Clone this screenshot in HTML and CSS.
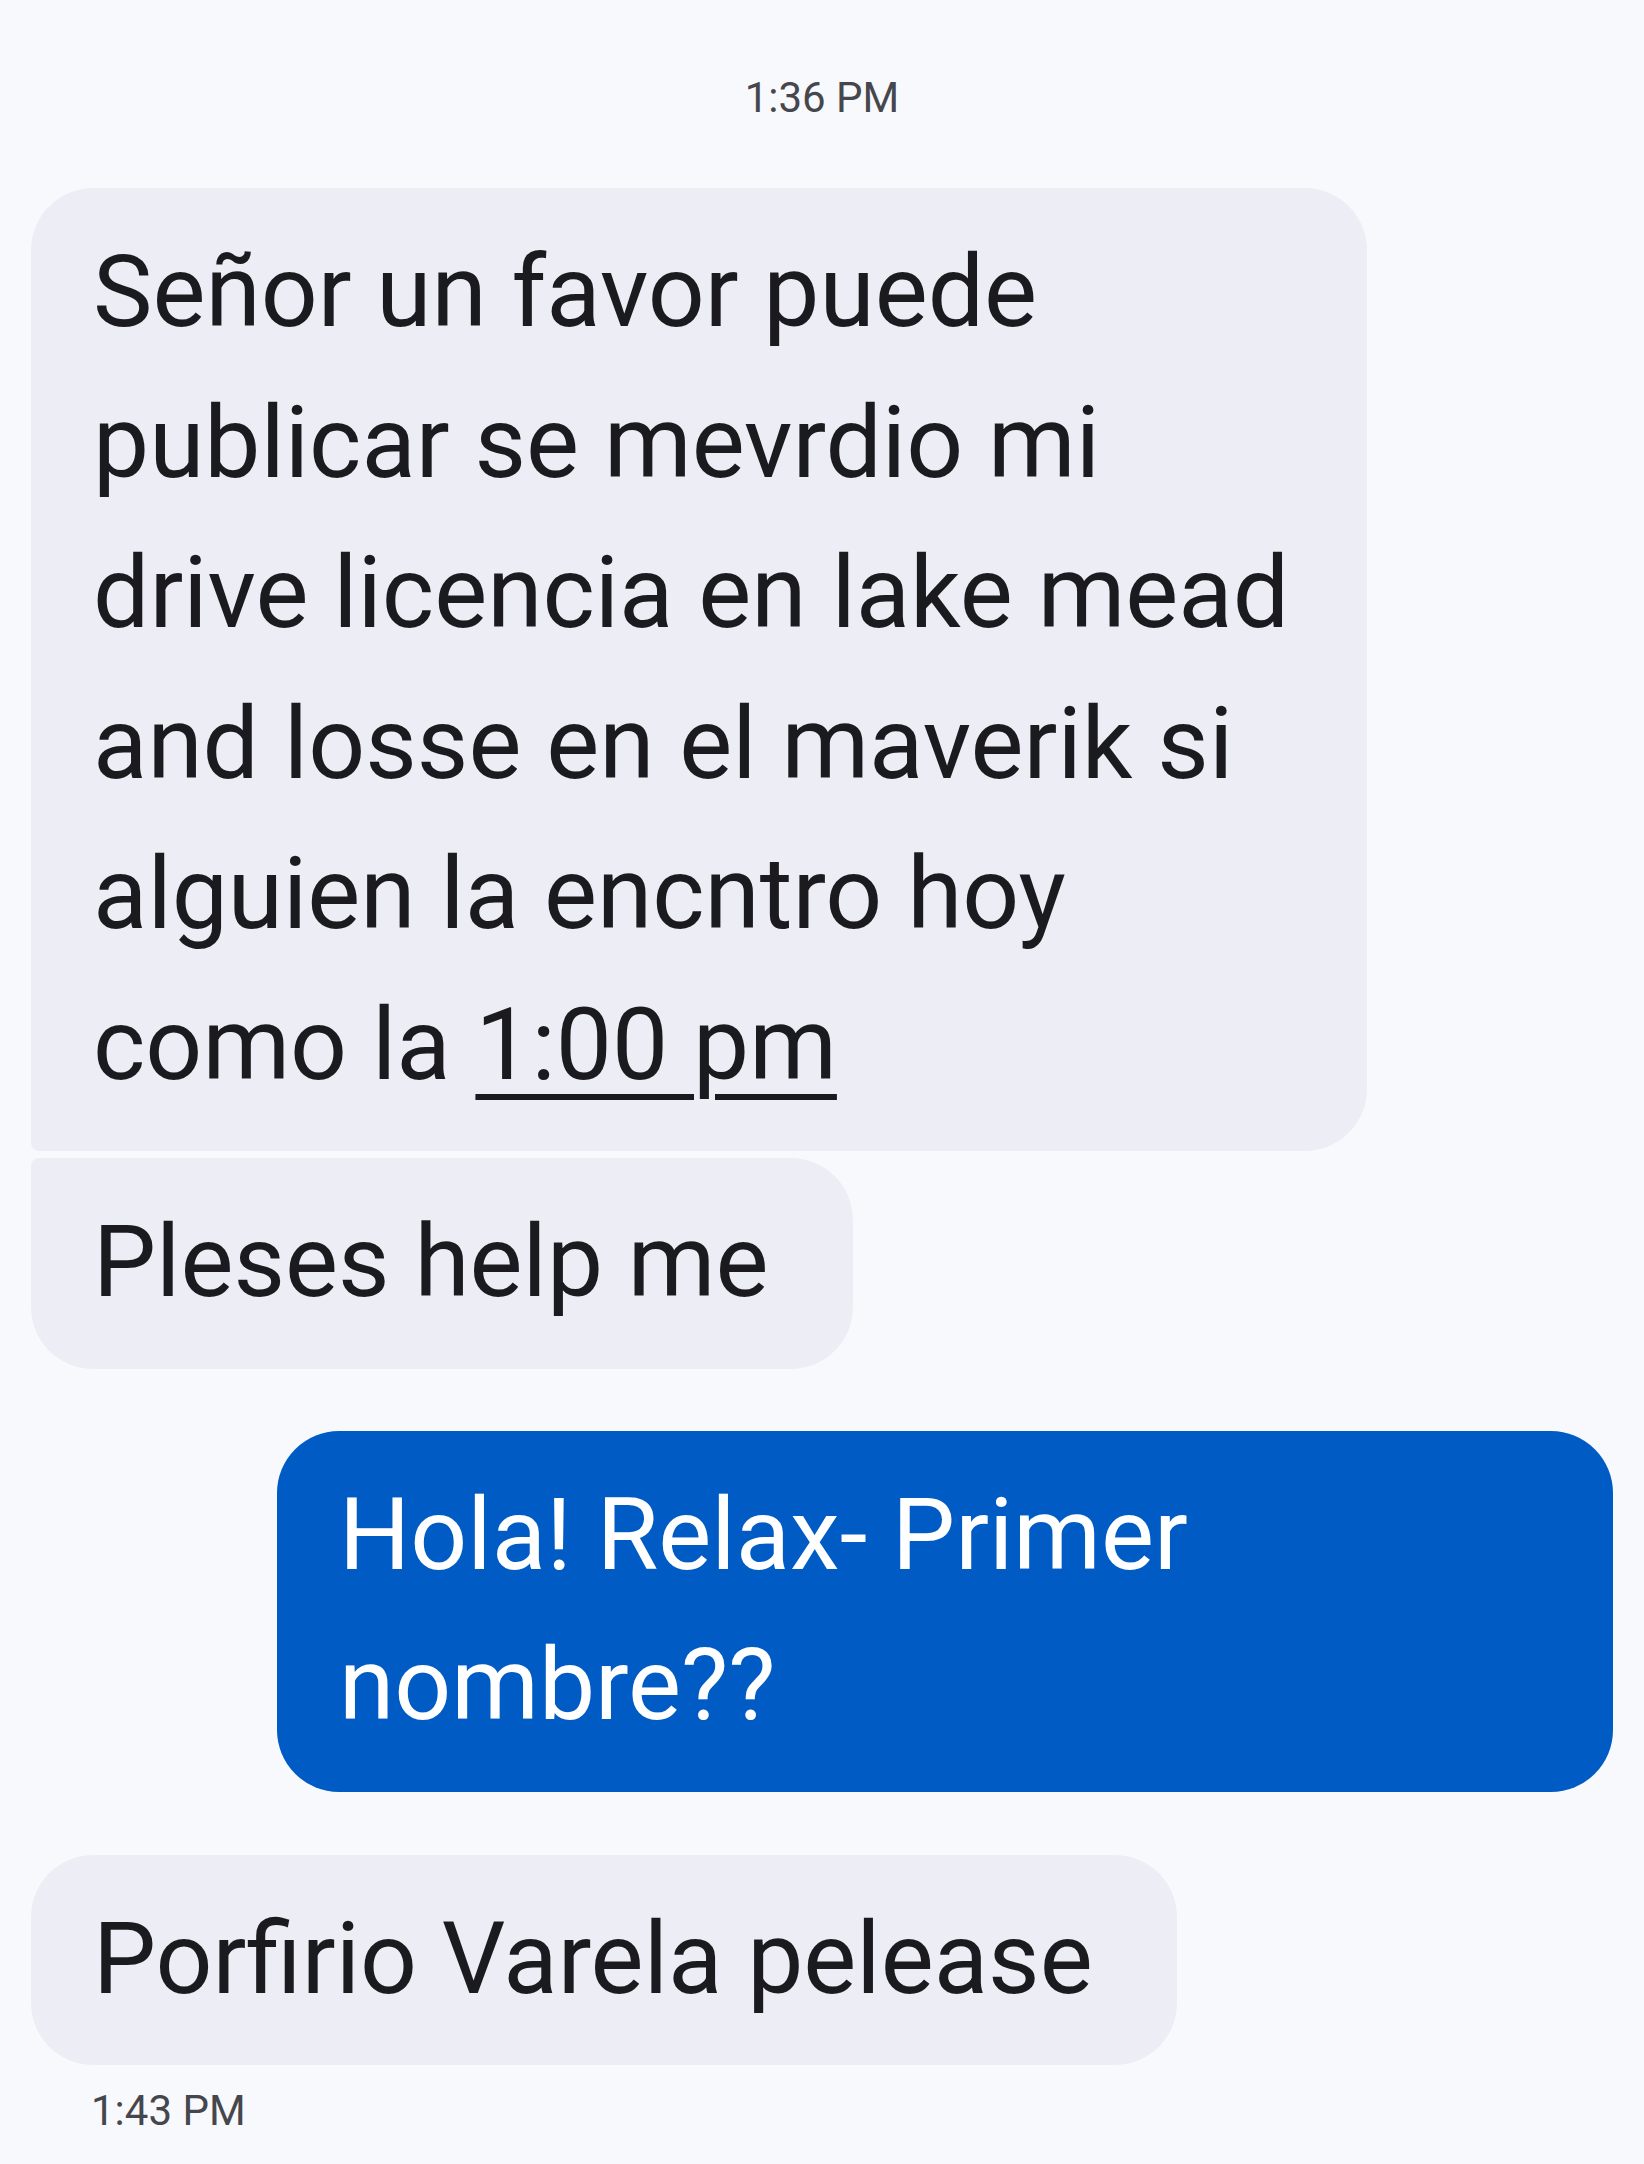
FILE: index.html
```html
<!DOCTYPE html>
<html lang="es">
<head>
    <meta charset="UTF-8">
    <meta name="viewport" content="width=device-width, initial-scale=1.0">
    <title>Mensajes</title>
    <link rel="stylesheet" href="styles.css">
</head>
<body>
    <div class="thread">
        <div class="stamp stamp-center">1:36 PM</div>

        <div class="msg msg-in msg-first">Señor un favor puede publicar se mevrdio mi drive licencia en lake mead and losse en el maverik si alguien la encntro hoy como la <span class="detected">1:00 pm</span></div>
        <div class="msg msg-in msg-last">Pleses help me</div>

        <div class="msg msg-out">Hola! Relax- Primer nombre??</div>

        <div class="msg msg-in msg-single">Porfirio Varela pelease</div>
        <div class="stamp stamp-left">1:43 PM</div>
    </div>
</body>
</html>
```

FILE: styles.css
```css
body {
    font-family: 'Roboto', 'Liberation Sans', sans-serif;
    background-color: #f8f9fd;
    color: #1b1b1f;
    margin: 0;
    padding: 0;
}
.thread {
    display: flex;
    flex-direction: column;
    padding: 74px 31px 40px 31px;
}
.stamp {
    font-size: 42px;
    line-height: 48px;
    color: #46474c;
}
.stamp-center {
    align-self: center;
    margin-bottom: 66px;
}
.stamp-left {
    align-self: flex-start;
    margin-top: 22px;
    padding-left: 60px;
}
.msg {
    box-sizing: border-box;
    max-width: 1336px;
    width: fit-content;
    padding: 29px 62px 31px 62px;
    font-size: 100px;
    line-height: 150.5px;
    border-radius: 62px;
}
.msg-in {
    align-self: flex-start;
    background-color: #edeef5;
}
.msg-first {
    border-bottom-left-radius: 8px;
}
.msg-last {
    border-top-left-radius: 8px;
    margin-top: 7px;
}
.msg-last, .msg-single {
    padding-right: 84px;
}
.msg-out {
    align-self: flex-end;
    width: 1336px;
    background-color: #015bc4;
    color: #ffffff;
    margin-top: 62px;
}
.msg-single {
    margin-top: 63px;
}
.detected {
    text-decoration: underline;
    text-decoration-thickness: 6px;
    text-underline-offset: 15px;
}
```
